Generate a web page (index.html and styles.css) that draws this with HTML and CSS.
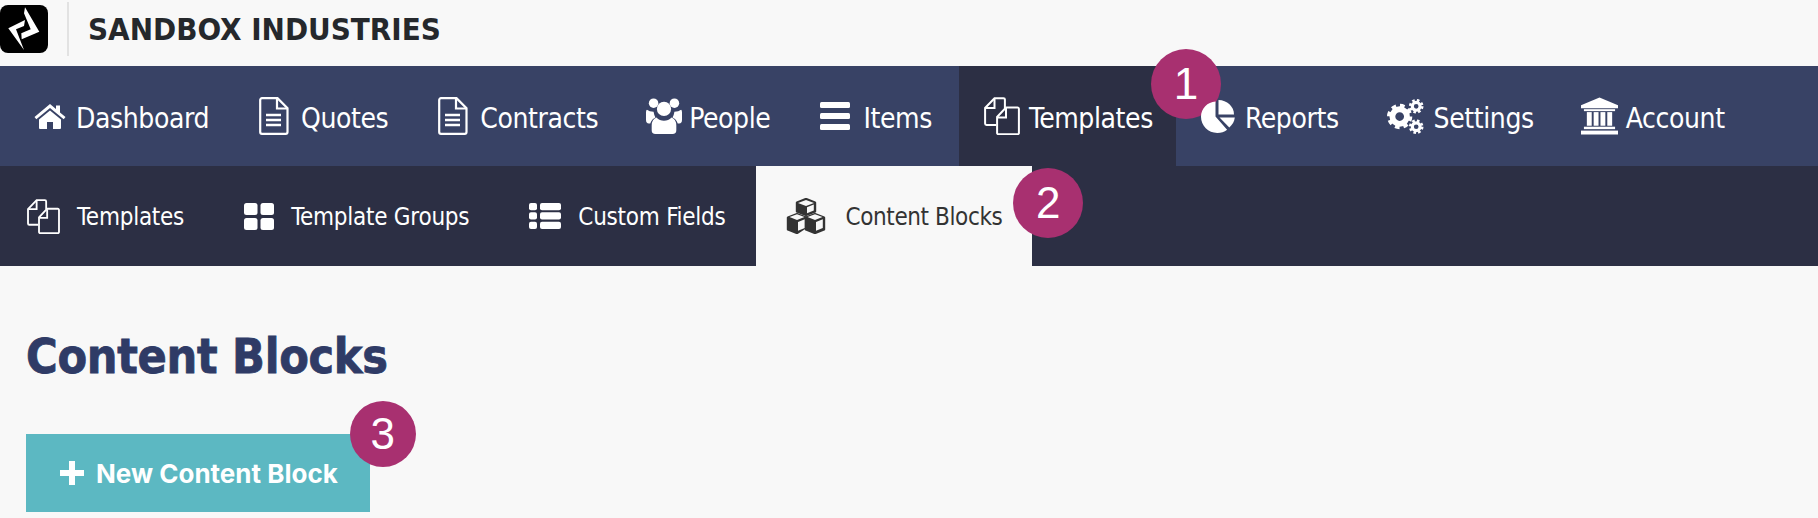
FILE: index.html
```html
<!DOCTYPE html>
<html lang="en">
<head>
    <meta charset="UTF-8">
    <meta name="viewport" content="width=device-width, initial-scale=1.0">
    <title>Content Blocks</title>
    <link rel="stylesheet" href="styles.css">
</head>
<body>
    <svg class="defs" width="0" height="0">
        <symbol id="i-doc" viewBox="0 0 30 38">
            <path d="M3 1.2h15.5l10 10V35a1.8 1.8 0 0 1-1.8 1.8H3A1.8 1.8 0 0 1 1.2 35V3A1.8 1.8 0 0 1 3 1.2z" fill="none" stroke="currentColor" stroke-width="2.2"/>
            <path d="M18 1.5v10h10" fill="none" stroke="currentColor" stroke-width="2.2"/>
            <path d="M7 18h15M7 23h15M7 28h15" stroke="currentColor" stroke-width="2.4"/>
        </symbol>
        <symbol id="i-copy" viewBox="0 0 36 38">
            <path d="M12 28H2.5a1.4 1.4 0 0 1-1.4-1.4V11L10.500 1.200h9a1.400 1.400 0 0 1 1.400 1.400V11" fill="none" stroke="currentColor" stroke-width="2"/>
            <path d="M10.500 2v9H2" fill="none" stroke="currentColor" stroke-width="2"/>
            <path d="M22 10.500h11.500a1.400 1.400 0 0 1 1.400 1.400v24a1.400 1.400 0 0 1-1.400 1.400h-19a1.400 1.400 0 0 1-1.400-1.400V20z" fill="none" stroke="currentColor" stroke-width="2"/>
            <path d="M22 11v9.500h-8.500" fill="none" stroke="currentColor" stroke-width="2"/>
        </symbol>
    </svg>

    <header class="topbar">
        <svg class="logo" viewBox="0 0 48 48">
            <rect width="48" height="48" rx="8" fill="#000"/>
            <path d="M25 2.300L39.300 26.700 21.700 34.300 21.300 28.300 30.700 24.300 24 8.300z" fill="#fff"/>
            <path d="M8.300 23.300L25 15 24 21 16 24.300 24 45z" fill="#fff"/>
        </svg>
        <div class="divider"></div>
        <div class="company">SANDBOX INDUSTRIES</div>
    </header>

    <nav class="mainnav">
        <a class="nav-item">
            <svg class="ico ico-home" viewBox="0 0 32 26"><path d="M16 1L0.500 14l1.800 2.200L16 5l13.700 11.200 1.800-2.200-5.500-4.600V2.500h-4v3.500z" fill="currentColor"/><path d="M16 7.500L5 16.500V25a1 1 0 0 0 1 1h7v-7h6v7h7a1 1 0 0 0 1-1v-8.500z" fill="currentColor"/></svg>
            <span class="label">Dashboard</span>
        </a>
        <a class="nav-item item-doc">
            <svg class="ico ico-doc"><use href="#i-doc"/></svg>
            <span class="label">Quotes</span>
        </a>
        <a class="nav-item item-doc">
            <svg class="ico ico-doc"><use href="#i-doc"/></svg>
            <span class="label">Contracts</span>
        </a>
        <a class="nav-item item-people">
            <svg class="ico ico-people" viewBox="0 0 38 38">
                <g fill="currentColor">
                    <circle cx="8" cy="5.500" r="5"/><circle cx="30" cy="5.500" r="5"/><circle cx="19" cy="11.500" r="7.500"/>
                    <path d="M1 12.500Q3.500 14.500 8 14.500 8.500 18 10 20.500 6 22 4.500 27H3Q0 27 0 23V15Q0 13 1 12.500z"/>
                    <path d="M37 12.500Q34.500 14.500 30 14.500 29.500 18 28 20.500 32 22 33.500 27H35Q38 27 38 23V15Q38 13 37 12.500z"/>
                    <path d="M11 20.500Q14.500 24 19 24 23.500 24 27 20.500 32 22.500 32 29V34Q32 38 28 38H10Q6 38 6 34V29Q6 22.500 11 20.500z"/>
                </g>
            </svg>
            <span class="label">People</span>
        </a>
        <a class="nav-item item-bars">
            <svg class="ico ico-bars" viewBox="0 0 30 28"><g fill="currentColor"><rect y="0" width="30" height="6" rx="1.500"/><rect y="11" width="30" height="6" rx="1.500"/><rect y="22" width="30" height="6" rx="1.500"/></g></svg>
            <span class="label">Items</span>
        </a>
        <a class="nav-item active">
            <svg class="ico ico-copy"><use href="#i-copy"/></svg>
            <span class="label">Templates</span>
            <span class="badge badge-1">1</span>
        </a>
        <a class="nav-item">
            <svg class="ico ico-pie" viewBox="0 0 34 33">
                <g fill="currentColor">
                    <path d="M14.500 16.500V1.500C6.500 2 0 8.500 0 16.800 0 25.700 7.300 33 16.300 33c3.800 0 7-1.200 9.800-3.300z"/>
                    <path d="M17.500 0v14.500H33C33 6.500 26 0 17.500 0z"/>
                    <path d="M18.500 17.500l9.800 10c3-2.600 5.200-6.200 5.500-10z"/>
                </g>
            </svg>
            <span class="label">Reports</span>
        </a>
        <a class="nav-item item-settings">
            <svg class="ico ico-cogs" viewBox="0 0 38 36">
                <g fill="none" stroke="currentColor">
                    <circle cx="13" cy="18" r="7.500" stroke-width="6"/>
                    <circle cx="13" cy="18" r="11" stroke-width="4" stroke-dasharray="4.640 4"/>
                    <circle cx="30" cy="7.500" r="4" stroke-width="3.200"/>
                    <circle cx="30" cy="7.500" r="6.200" stroke-width="2.600" stroke-dasharray="2.600 2.270"/>
                    <circle cx="30" cy="28.500" r="4" stroke-width="3.200"/>
                    <circle cx="30" cy="28.500" r="6.200" stroke-width="2.600" stroke-dasharray="2.600 2.270"/>
                </g>
            </svg>
            <span class="label">Settings</span>
        </a>
        <a class="nav-item item-bank">
            <svg class="ico ico-bank" viewBox="0 0 38 38">
                <g fill="currentColor">
                    <path d="M19 0L0 8v3h38V8z"/>
                    <rect x="3" y="12" width="32" height="2"/>
                    <rect x="6" y="15" width="5" height="14"/><rect x="13" y="15" width="5" height="14"/><rect x="20" y="15" width="5" height="14"/><rect x="27" y="15" width="5" height="14"/>
                    <rect x="3" y="30" width="32" height="2.500"/>
                    <rect x="0" y="34" width="38" height="4"/>
                </g>
            </svg>
            <span class="label">Account</span>
        </a>
    </nav>

    <nav class="subnav">
        <a class="sub-item first">
            <svg class="sub-ico ico-sub-copy"><use href="#i-copy"/></svg>
            <span class="label">Templates</span>
        </a>
        <a class="sub-item">
            <svg class="sub-ico ico-grid" viewBox="0 0 30 27"><g fill="currentColor"><rect width="13.500" height="12" rx="2.500"/><rect x="16.500" width="13.500" height="12" rx="2.500"/><rect y="15" width="13.500" height="12" rx="2.500"/><rect x="16.500" y="15" width="13.500" height="12" rx="2.500"/></g></svg>
            <span class="label">Template Groups</span>
        </a>
        <a class="sub-item">
            <svg class="sub-ico ico-list" viewBox="0 0 32 26"><g fill="currentColor"><rect width="8" height="7.300" rx="2"/><rect x="11" width="21" height="7.300" rx="2"/><rect y="9.300" width="8" height="7.300" rx="2"/><rect x="11" y="9.300" width="21" height="7.300" rx="2"/><rect y="18.700" width="8" height="7.300" rx="2"/><rect x="11" y="18.700" width="21" height="7.300" rx="2"/></g></svg>
            <span class="label">Custom Fields</span>
        </a>
        <a class="sub-item active">
            <svg class="sub-ico ico-cubes" viewBox="0 0 40 36">
                <g stroke="currentColor" stroke-width="2.400" stroke-linejoin="round">
                    <path d="M20 1l9 3.500v9L20 17l-9-3.500v-9z" fill="currentColor"/>
                    <path d="M12 5l8 3 8-3-8-3z" fill="#f8f8f8" stroke="none"/>
                    <path d="M21 9.200v6l6.800-2.700v-6z" fill="#f8f8f8" stroke="none"/>
                    <path d="M11 16l9 3.500v9.500L11 35l-9-3.500v-12z" fill="currentColor"/>
                    <path d="M3.500 19l7.500 3 7.500-3-7.500-2.800z" fill="#f8f8f8" stroke="none"/>
                    <path d="M12 24v8.700l6.800-2.700v-8.700z" fill="#f8f8f8" stroke="none"/>
                    <path d="M29 16l9 3.500v12L29 35l-9-3.500v-12z" fill="currentColor"/>
                    <path d="M21.500 19l7.500 3 7.500-3-7.500-2.800z" fill="#f8f8f8" stroke="none"/>
                    <path d="M30 24v8.700l6.800-2.700v-8.700z" fill="#f8f8f8" stroke="none"/>
                </g>
            </svg>
            <span class="label">Content Blocks</span>
            <span class="badge badge-2">2</span>
        </a>
    </nav>

    <main class="content">
        <h1 class="page-title">Content Blocks</h1>
        <a class="btn-new">
            <svg class="plus" viewBox="0 0 24 24"><path d="M9 0h6v9h9v6h-9v9H9v-9H0V9h9z" fill="currentColor"/></svg>
            New Content Block
            <span class="badge badge-3">3</span>
        </a>
    </main>
</body>
</html>
```

FILE: styles.css
```css
* {
    box-sizing: border-box;
}
html, body {
    height: 100%;
}
body {
    margin: 0;
    overflow: hidden;
    background-color: #f8f8f8;
    font-family: "DejaVu Sans Condensed", "DejaVu Sans", sans-serif;
    font-stretch: condensed;
}
.defs {
    display: block;
    height: 0;
}

.topbar {
    display: flex;
    align-items: center;
    height: 66px;
    padding-bottom: 8px;
}
.logo {
    width: 48px;
    height: 48px;
}
.divider {
    width: 2px;
    height: 54px;
    margin: 0 19px;
    background-color: #e2e2e2;
}
.company {
    font-size: 31px;
    font-weight: bold;
    color: #25282c;
}

.mainnav {
    display: flex;
    height: 100px;
    padding-left: 9px;
    background-color: #384265;
}
.nav-item {
    position: relative;
    display: flex;
    align-items: center;
    gap: 10px;
    padding: 0 25px;
    font-size: 28px;
    letter-spacing: -0.4px;
    color: #fff;
}
.nav-item.active {
    gap: 9px;
    padding-right: 23px;
    background-color: #2c2f44;
}
.item-doc {
    gap: 12px;
}
.item-people {
    gap: 6px;
    margin-left: -3px;
}
.item-bars {
    gap: 13px;
    padding-right: 27px;
}
.item-settings {
    margin-left: -2px;
}
.item-bank {
    gap: 8px;
    margin-left: -3px;
}
.label {
    margin-top: 4px;
}
.ico {
    display: block;
    flex: none;
}
.ico-home { width: 32px; height: 26px; }
.ico-doc { width: 30px; height: 38px; }
.ico-people { width: 38px; height: 36px; }
.ico-bars { width: 30px; height: 28px; }
.ico-copy { width: 36px; height: 38px; }
.ico-pie { width: 34px; height: 33px; }
.ico-cogs { width: 37px; height: 35px; }
.ico-bank { width: 37px; height: 38px; }

.subnav {
    display: flex;
    height: 100px;
    background-color: #2c2f44;
}
.sub-item {
    position: relative;
    display: flex;
    align-items: center;
    gap: 17px;
    padding: 0 30px;
    font-size: 24px;
    letter-spacing: -0.25px;
    color: #fff;
}
.sub-item.first {
    padding-left: 27px;
}
.sub-item .label {
    margin-top: 2px;
}
.sub-item.active {
    gap: 20px;
    letter-spacing: -0.4px;
    background-color: #f8f8f8;
    color: #333;
}
.sub-ico {
    display: block;
    flex: none;
}
.ico-sub-copy { width: 33px; height: 35px; }
.ico-grid { width: 30px; height: 27px; }
.ico-list { width: 32px; height: 26px; }
.ico-cubes { width: 40px; height: 36px; }

.content {
    padding: 62px 26px 0;
}
.page-title {
    margin: 0 0 50px;
    font-size: 48px;
    line-height: 56px;
    font-weight: bold;
    letter-spacing: -0.3px;
    -webkit-text-stroke: 0.8px #2f3b66;
    color: #2f3b66;
}
.btn-new {
    position: relative;
    display: inline-flex;
    align-items: center;
    gap: 12px;
    height: 78px;
    padding: 0 32px 0 34px;
    background-color: #5cb8c2;
    font-family: Inter, sans-serif;
    font-stretch: normal;
    font-size: 26px;
    font-weight: bold;
    color: #fff;
}
.plus {
    width: 24px;
    height: 24px;
}

.badge {
    position: absolute;
    display: flex;
    align-items: center;
    justify-content: center;
    width: 70px;
    height: 70px;
    border-radius: 50%;
    background-color: #a83070;
    font-family: "Liberation Sans", sans-serif;
    font-stretch: normal;
    font-size: 44px;
    letter-spacing: 0;
    font-weight: normal;
    color: #fff;
}
.badge-1 {
    top: -17px;
    right: -45px;
}
.badge-2 {
    top: 2px;
    right: -51px;
}
.badge-3 {
    top: -33px;
    right: -46px;
    width: 66px;
    height: 66px;
}
```
